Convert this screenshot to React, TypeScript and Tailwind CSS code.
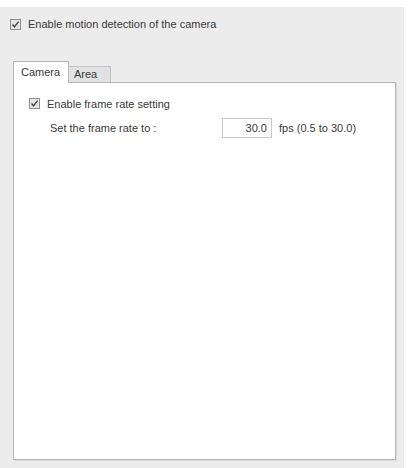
import React from 'react';

const Check = () => (
  <span className="flex h-[11px] w-[11px] items-center justify-center border border-[#8f8f8f] bg-[#e4e4e4]">
    <svg width="9" height="9" viewBox="0 0 9 9">
      <path d="M1.5 4.5 L3.5 6.8 L7.6 1.6" fill="none" stroke="#4a4a4a" strokeWidth="1.4" />
    </svg>
  </span>
);

export default function App() {
  return (
    <div className="h-[468px] w-[409px] bg-white font-['Liberation_Sans',Arial,sans-serif] text-[11px] text-[#3a3a3a]">
      <div className="mt-[7px] h-[461px] w-[404px] bg-[#ececec] pl-[13px] pt-[9px]">
        <div className="-ml-[3px] flex items-center gap-[7px]">
          <Check />
          <span>Enable motion detection of the camera</span>
        </div>

        <div className="mt-[28px] flex items-end">
          <div className="relative z-10 -mb-px flex h-[22px] w-[56px] items-center border border-b-0 border-[#b8b8b8] bg-white pl-[7px]">
            Camera
          </div>
          <div className="flex h-[16px] w-[42px] items-center border border-b-0 border-l-0 border-[#c4c4c4] bg-[#e2e2e2] pl-[5px]">
            Area
          </div>
        </div>

        <div className="h-[378px] w-[383px] border border-[#b8b8b8] bg-white pl-[15px] pt-[13px] shadow-[1px_1px_0_#d8d8d8]">
          <div className="flex items-center gap-[7px]">
            <Check />
            <span>Enable frame rate setting</span>
          </div>
          <div className="mt-[6px] flex items-center pl-[21px]">
            <span className="w-[172px]">Set the frame rate to :</span>
            <div className="flex h-[20px] w-[50px] items-center justify-end border border-[#c8c8c8] pr-[4px]">30.0</div>
            <span className="ml-[7px]">fps (0.5 to 30.0)</span>
          </div>
        </div>
      </div>
    </div>
  );
}
